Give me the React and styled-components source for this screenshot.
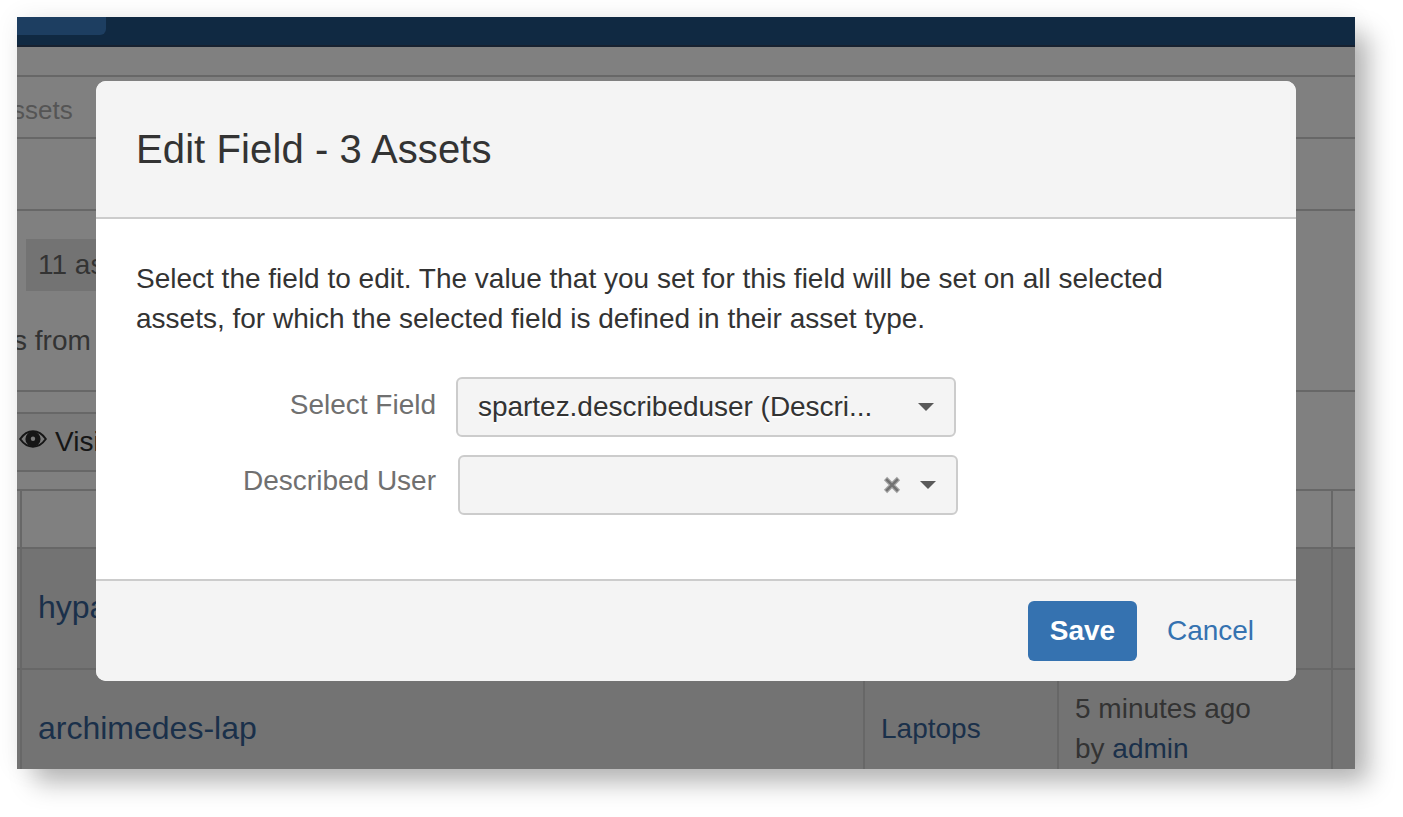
import React from "react";
import styled, { createGlobalStyle } from "styled-components";

const Global = createGlobalStyle`
  * { box-sizing: border-box; }
  body {
    margin: 0;
    background: #fff;
    font-family: "Liberation Sans", Arial, sans-serif;
    font-size: 28px;
    line-height: 40px;
    color: #333;
  }
`;

const Canvas = styled.div`
  height: 817px;
  padding: 17px;
  overflow: hidden;
`;

const Frame = styled.div`
  position: relative;
  width: 1338px;
  height: 752px;
  background: #808080;
  box-shadow: 16px 16px 24px -2px rgba(0, 0, 0, 0.27), 0 0 24px rgba(0, 0, 0, 0.07);
`;

const Page = styled.div`
  display: flex;
  flex-direction: column;
  height: 100%;
  overflow: hidden;
  white-space: nowrap;
`;

const NavBar = styled.div`
  flex: none;
  height: 30px;
  background: #102942;
  border-bottom: 2px solid #172130;
`;

const NavTab = styled.div`
  width: 89px;
  height: 18px;
  background: #1d3e61;
  border-bottom-right-radius: 6px;
`;

const Strip = styled.div`
  flex: none;
  height: ${(p) => p.$height}px;
  border-bottom: 2px solid #676767;
`;

const Crumb = styled.div`
  padding-top: 13px;
  margin-left: -5px;
  font-size: 26px;
  color: #555;
`;

const Count = styled.div`
  width: 200px;
  height: 52px;
  margin: 28px 0 0 9px;
  padding: 6px 12px;
  background: #737373;
  color: #333;
`;

const Note = styled.div`
  margin: 30px 0 0 -4px;
  color: #333;
`;

const Toolbar = styled.div`
  flex: none;
  display: flex;
  align-items: center;
  gap: 8px;
  width: 600px;
  height: 60px;
  margin: 20px 0 17px;
  padding-left: 2px;
  background: #7a7a7a;
  border: solid #676767;
  border-width: 2px 0;
  color: #161616;
`;

const EyeIcon = styled.svg`
  display: block;
  width: 28px;
  height: 18px;
  margin-top: -7px;
`;

const Table = styled.div`
  flex: none;
  display: grid;
  grid-template-columns: 5px 843px 194px 274px 22px;
  grid-template-rows: 58px 121px 121px;
  border-top: 2px solid #676767;
  margin-bottom: -100px;
`;

const Cell = styled.div`
  display: flex;
  flex-direction: column;
  justify-content: center;
  padding: 0 0 2px 16px;
  border-right: 2px solid #676767;
  border-bottom: 2px solid #676767;
  background: ${(p) => (p.$head ? "#808080" : "#737373")};

  &:nth-child(5n + 1) { padding: 0; }
  &:nth-child(5n) { border-right: 0; padding: 0; }
`;

const Link = styled.span`
  color: #1a304a;
  font-size: ${(p) => (p.$large ? 32 : 28)}px;
  padding-bottom: ${(p) => (p.$large ? 2 : 0)}px;
`;

const Dialog = styled.section`
  position: absolute;
  top: 64px;
  left: 79px;
  display: flex;
  flex-direction: column;
  width: 1200px;
  height: 600px;
  background: #fff;
  border-radius: 10px;
  overflow: hidden;
`;

const DialogHeader = styled.header`
  height: 138px;
  padding: 43px 40px 0;
  background: #f4f4f4;
  border-bottom: 2px solid #ccc;
`;

const Title = styled.h2`
  margin: 0;
  font-size: 40px;
  font-weight: 400;
  line-height: 50px;
  letter-spacing: 0.1px;
`;

const DialogBody = styled.div`
  flex: 1;
  padding: 40px 40px 0;
`;

const Intro = styled.p`
  margin: 0 0 38px;
  white-space: nowrap;
`;

const Field = styled.div`
  display: flex;
  height: ${(p) => p.$height}px;
`;

const Label = styled.label`
  width: 300px;
  padding-top: ${(p) => p.$top}px;
  text-align: right;
  color: #707070;
`;

const Select = styled.div`
  display: flex;
  align-items: center;
  width: 500px;
  height: 60px;
  margin-left: ${(p) => p.$gap}px;
  padding: 0 20px;
  background: #f4f4f4;
  border: 2px solid #ccc;
  border-radius: 6px;
  text-shadow: 0 2px 0 #fff;
`;

const Value = styled.span`
  flex: 1;
  letter-spacing: -0.03px;
`;

const Clear = styled.svg`
  width: 18px;
  height: 18px;
  margin-right: 19px;
`;

const Caret = styled.span`
  border: solid transparent;
  border-width: 8px 8px 0;
  border-top-color: #595959;
`;

const DialogFooter = styled.footer`
  display: flex;
  justify-content: flex-end;
  align-items: center;
  gap: 10px;
  height: 102px;
  padding-right: 22px;
  background: #f4f4f4;
  border-top: 2px solid #ccc;
`;

const Button = styled.button`
  height: 60px;
  width: ${(p) => p.$width}px;
  padding: 0;
  border: 0;
  border-radius: 6px;
  background: ${(p) => (p.$primary ? "#3572b0" : "transparent")};
  color: ${(p) => (p.$primary ? "#fff" : "#3572b0")};
  font: ${(p) => (p.$primary ? "bold" : "normal")} 28px/40px "Liberation Sans", Arial, sans-serif;
`;

export default function App() {
  return (
    <Canvas>
      <Global />
      <Frame>
        <Page>
          <NavBar><NavTab /></NavBar>
          <Strip $height={30} />
          <Strip $height={62}><Crumb>ssets</Crumb></Strip>
          <Strip $height={72} />
          <Strip $height={181}>
            <Count>11 assets</Count>
            <Note>s from</Note>
          </Strip>
          <Toolbar>
            <EyeIcon viewBox="0 0 28 18">
              <path d="M1.200 9C5 3.500 9 1.300 14 1.300S23 3.500 26.800 9C23 14.500 19 16.700 14 16.700S5 14.500 1.200 9Z" fill="none" stroke="#161616" strokeWidth="2" />
              <circle cx="14" cy="9" r="7.600" fill="#161616" />
              <circle cx="14" cy="8.800" r="2.200" fill="#7a7a7a" />
            </EyeIcon>
            <span>Visible</span>
          </Toolbar>
          <Table>
            <Cell $head /><Cell $head /><Cell $head /><Cell $head /><Cell $head />
            <Cell />
            <Cell><Link $large>hypatia-lap</Link></Cell>
            <Cell /><Cell /><Cell />
            <Cell />
            <Cell><Link $large>archimedes-lap</Link></Cell>
            <Cell><Link>Laptops</Link></Cell>
            <Cell>
              <span>5 minutes ago</span>
              <span>by <Link>admin</Link></span>
            </Cell>
            <Cell />
          </Table>
        </Page>
        <Dialog>
          <DialogHeader><Title>Edit Field - 3 Assets</Title></DialogHeader>
          <DialogBody>
            <Intro>
              Select the field to edit. The value that you set for this field will be set on all selected
              <br />
              assets, for which the selected field is defined in their asset type.
            </Intro>
            <Field $height={78}>
              <Label $top={8}>Select Field</Label>
              <Select $gap={20}>
                <Value>spartez.describeduser (Descri...</Value>
                <Caret />
              </Select>
            </Field>
            <Field $height={60}>
              <Label $top={6}>Described User</Label>
              <Select $gap={22}>
                <Value />
                <Clear viewBox="0 0 18 18">
                  <path d="M2.500 2.500L15.500 15.500M15.500 2.500L2.500 15.500" stroke="#a5a5a5" strokeWidth="4.600" />
                  <path d="M3.200 3.200L14.800 14.800M14.800 3.200L3.200 14.800" stroke="#727272" strokeWidth="2.400" />
                </Clear>
                <Caret />
              </Select>
            </Field>
          </DialogBody>
          <DialogFooter>
            <Button $primary $width={109}>Save</Button>
            <Button $width={127}>Cancel</Button>
          </DialogFooter>
        </Dialog>
      </Frame>
    </Canvas>
  );
}
